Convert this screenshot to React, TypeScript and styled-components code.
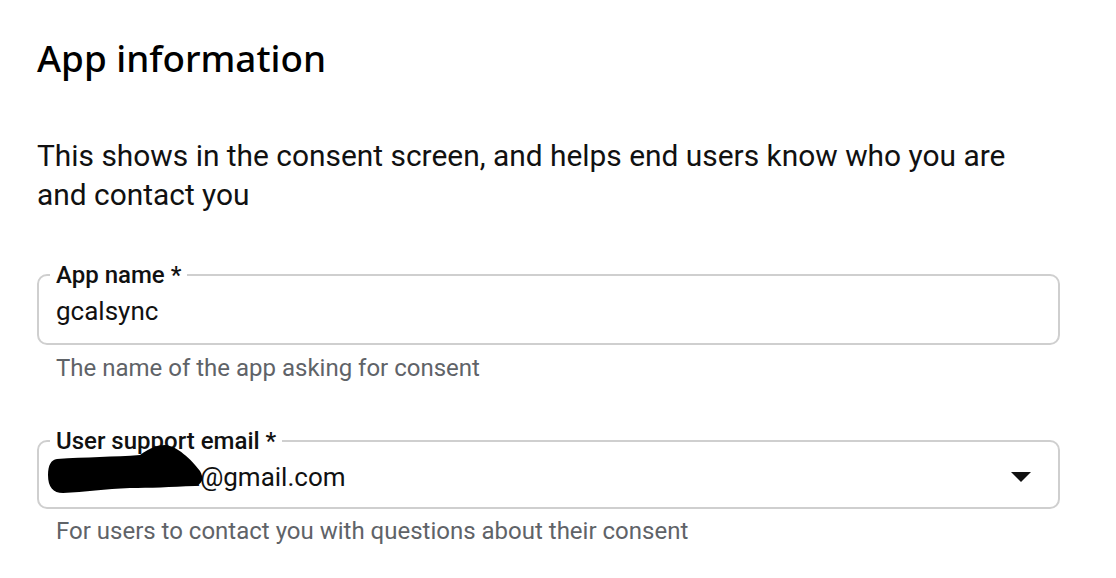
import styled, { createGlobalStyle } from "styled-components";

const GlobalStyle = createGlobalStyle`
  html, body {
    margin: 0;
    padding: 0;
    background: #ffffff;
  }
  body {
    font-family: Roboto, "Liberation Sans", Arial, sans-serif;
    color: #202124;
  }
`;

const Page = styled.div`
  width: 1116px;
  height: 578px;
  box-sizing: border-box;
  padding: 32px 56px 0 37px;
  overflow: hidden;
`;

const Title = styled.h1`
  margin: 0;
  font-family: "Noto Sans", "Open Sans", sans-serif;
  font-size: 36.8px;
  font-weight: 500;
  line-height: 52px;
  color: #000;
`;

const Intro = styled.p`
  margin: 52px 0 0;
  max-width: 1000px;
  font-size: 29.9px;
  line-height: 39px;
  color: #111;
`;

interface FieldProps {
  $top: number;
  $bottom: number;
}

const Field = styled.fieldset<FieldProps>`
  position: relative;
  margin: ${(p) => p.$top}px 0 0;
  padding: 0 17px ${(p) => p.$bottom}px;
  border: 2px solid #cfcfcf;
  border-radius: 10px;
  min-width: 0;
`;

const Legend = styled.legend`
  padding: 0 6px;
  margin-left: -6px;
  font-size: 24px;
  font-weight: 500;
  line-height: 28px;
  color: #111;
`;

const Value = styled.div`
  display: flex;
  align-items: center;
  height: 44px;
  font-size: 26px;
  color: #111;
`;

const EmailText = styled.span`
  margin-left: 131px;
  flex: 1;
`;

const Arrow = styled.span`
  width: 0;
  height: 0;
  margin-right: 10px;
  border-left: 10px solid transparent;
  border-right: 10px solid transparent;
  border-top: 10px solid #111;
`;

const Scribble = styled.svg`
  position: absolute;
  left: 6px;
  top: -14px;
  pointer-events: none;
`;

const Helper = styled.div<{ $top: number }>`
  margin-top: ${(p) => p.$top}px;
  padding-left: 19px;
  font-size: 24px;
  line-height: 28px;
  color: #5f6368;
`;

export default function App() {
  return (
    <>
      <GlobalStyle />
      <Page>
        <Title>App information</Title>
        <Intro>
          This shows in the consent screen, and helps end users know who you are
          and contact you
        </Intro>

        <Field $top={47} $bottom={10}>
          <Legend>App name *</Legend>
          <Value>gcalsync</Value>
        </Field>
        <Helper $top={9}>The name of the app asking for consent</Helper>

        <Field $top={45} $bottom={8}>
          <Legend>User support email *</Legend>
          <Value>
            <EmailText>z@gmail.com</EmailText>
            <Arrow />
          </Value>
          <Scribble width="170" height="60" viewBox="0 0 170 60">
            <path
              d="M3 34 C3 24 6 19 12 18 C40 16 70 16 95 14 C105 7 112 4 120 4 C132 5 146 18 155 30 C159 37 158 43 150 45 C125 46 105 47 85 47 C60 48 40 51 18 52 C8 52 3 46 3 34 Z"
              fill="#000"
            />
          </Scribble>
        </Field>
        <Helper $top={8}>
          For users to contact you with questions about their consent
        </Helper>
      </Page>
    </>
  );
}
